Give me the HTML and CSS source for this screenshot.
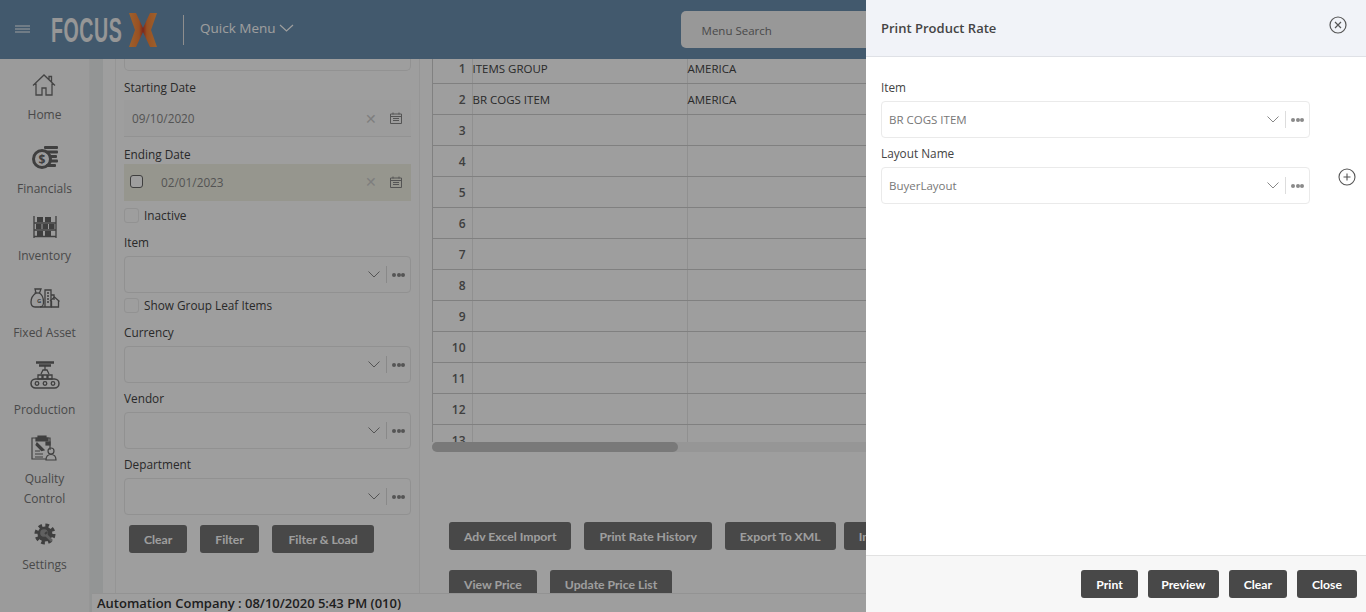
FILE: index.html
```html
<!DOCTYPE html>
<html lang="en">
<head>
  <meta charset="UTF-8">
  <title>Print Product Rate</title>
  <link rel="stylesheet" href="styles.css">
</head>
<body>
<div class="topbar">
  <svg class="burger" width="16" height="8" viewBox="0 0 16 8"><path d="M0 1h15M0 4h15M0 7h15" stroke="#fff" stroke-width="1.2"/></svg>
  <span class="logo-text">FOCUS</span>
  <svg class="logo-x" width="28" height="34" viewBox="0 0 28 34">
    <defs>
      <linearGradient id="xfill" x1="0" y1="0" x2="1" y2="0">
        <stop offset="0" stop-color="#ff9c48"/>
        <stop offset=".36" stop-color="#f58238"/>
        <stop offset=".5" stop-color="#c8402f"/>
        <stop offset=".64" stop-color="#f58238"/>
        <stop offset="1" stop-color="#ff9c48"/>
      </linearGradient>
    </defs>
    <path d="M0 0h7l7 15 7-15h7l-6 17 6 17h-7l-7-15-7 15H0l6-17z" fill="url(#xfill)"/>
  </svg>
  <span class="top-divider"></span>
  <span class="quick-menu">Quick Menu</span>
  <svg class="quick-chev" width="15" height="8" viewBox="0 0 15 8"><path d="M1 1l6.500 6L14 1" fill="none" stroke="#fff" stroke-width="1.200"/></svg>
  <div class="menu-search">Menu Search</div>
</div>

<div class="layout">
  <div class="sidebar">
    <div class="nav-item nav-home">
      <svg width="24" height="22" viewBox="0 0 24 22" fill="none" stroke="#6f6f6f" stroke-width="1.300"><path d="M1 11.500L12 1l11 10.500M17 5.500V2.500h2.500v5.500M4 9.500V21h6v-7h4v7h6V9.500"/></svg>
      <span>Home</span>
    </div>
    <div class="nav-item nav-fin">
      <svg width="26" height="24" viewBox="0 0 26 24"><rect x="12" y="0" width="14" height="3" rx="1" fill="#666"/><rect x="14" y="4.500" width="12" height="3" rx="1" fill="#666"/><rect x="17" y="9" width="8" height="3" rx="1" fill="#666"/><rect x="17" y="13.500" width="9" height="3" rx="1" fill="#666"/><rect x="14" y="18" width="10" height="3" rx="1" fill="#666"/><circle cx="10" cy="13" r="8.500" fill="none" stroke="#666" stroke-width="3"/><text x="10" y="17.500" text-anchor="middle" class="coin-text">$</text></svg>
      <span>Financials</span>
    </div>
    <div class="nav-item nav-inv">
      <svg width="24" height="22" viewBox="0 0 24 22"><path d="M1 0v22M23 0v22M1 7h22M1 14h22M1 20.500h22" stroke="#666" stroke-width="1.300"/><path d="M4 1h6v5H4zM12 1h6v5h-6zM3 8h5.500v5H3zM9.500 8H15v5H9.500zM16 8h5.500v5H16zM4 15h6v5H4zM12 15h6v5h-6z" fill="#666"/></svg>
      <span>Inventory</span>
    </div>
    <div class="nav-item nav-fixed">
      <svg width="30" height="20" viewBox="0 0 30 20" fill="none" stroke="#666" stroke-width="1.300"><path d="M5 1h6L9.500 5c3 2 4 5 4 9 0 4-1 5-4 5H5c-3 0-4-2-4-5 0-4 2-7 5-9z"/><path d="M4.500 5h5.500"/><path d="M15 19V2h6v17zM21 7h3v5M15 19H10M17 5h2M17 8h2M17 11h2M17 14h2"/><path d="M20 13l4.500-4 5 4.500M21.500 13v6h7v-6"/><text x="7" y="15" class="bag-text" stroke="none">G</text></svg>
      <span>Fixed Asset</span>
    </div>
    <div class="nav-item nav-prod">
      <svg width="30" height="28" viewBox="0 0 30 28" fill="none" stroke="#666" stroke-width="1.300"><path d="M6 1.500h18M9 4.500h12" stroke-width="2.500"/><path d="M15 5v4M11 13l2-4h4l2 4"/><path d="M8 14h4v4H8zM13 14h4v4h-4zM18 14h4v4h-4z"/><rect x="1" y="18" width="28" height="9" rx="4.500" stroke-width="1.500"/><circle cx="7" cy="22.500" r="1.800"/><circle cx="15" cy="22.500" r="1.800"/><circle cx="23" cy="22.500" r="1.800"/></svg>
      <span>Production</span>
    </div>
    <div class="nav-item nav-qual">
      <svg width="26" height="26" viewBox="0 0 26 26" fill="none" stroke="#666" stroke-width="1.200"><path d="M5 3h14v12M15 24H1V3h4"/><path d="M7 3V1h8v2h2v3H5V3z" fill="#666"/><path d="M4 19h8M4 22h8M4 16h5"/><path d="M6 8l7 7-2.500 .5L5 10z" fill="#666"/><rect x="15" y="7" width="4" height="3" fill="#666"/><circle cx="20" cy="16" r="3"/><path d="M15 25c0-4 2-5.500 5-5.500s5 1.500 5 5.500z"/></svg>
      <span>Quality<br>Control</span>
    </div>
    <div class="nav-item nav-set">
      <svg width="22" height="22" viewBox="0 0 22 22"><circle cx="11" cy="11" r="8" fill="none" stroke="#666" stroke-width="5" stroke-dasharray="3.300 3"/><circle cx="11" cy="11" r="7.500" fill="#666"/><circle cx="10" cy="10" r="3.800" fill="#9c9c9c"/><path d="M11.500 11.500L18 18" stroke="#9c9c9c" stroke-width="2.600"/><path d="M13 9l-2 2" stroke="#666" stroke-width="2"/></svg>
      <span>Settings</span>
    </div>
  </div>

  <div class="strip"></div>

  <div class="work">
    <div class="content">
      <div class="gutter"></div>
      <div class="filters">
        <div class="stub"></div>

        <div class="label">Starting Date</div>
        <div class="date-input date-start">
          <span class="date-val">09/10/2020</span>
          <span class="date-x">&#10005;</span>
          <svg class="cal" width="12" height="12" viewBox="0 0 12 12" fill="none" stroke="#888"><path d="M.5 2h11v9.500H.5zM.5 4.500h11M3 .5v2M9 .5v2M3 6.500h6M3 8.500h6"/></svg>
        </div>

        <div class="label">Ending Date</div>
        <div class="date-input date-end">
          <span class="chk-native"></span>
          <span class="date-val">02/01/2023</span>
          <span class="date-x">&#10005;</span>
          <svg class="cal" width="12" height="12" viewBox="0 0 12 12" fill="none" stroke="#888"><path d="M.5 2h11v9.500H.5zM.5 4.500h11M3 .5v2M9 .5v2M3 6.500h6M3 8.500h6"/></svg>
        </div>

        <div class="check-row check-first"><span class="chk"></span>Inactive</div>

        <div class="label">Item</div>
        <div class="select">
          <span class="sel-val"></span>
          <svg class="chev" width="12" height="7" viewBox="0 0 12 7"><path d="M.5 .5L6 6l5.500-5.500" fill="none" stroke="#888"/></svg>
          <span class="sel-div"></span>
          <span class="dots"><i></i><i></i><i></i></span>
        </div>

        <div class="check-row"><span class="chk"></span>Show Group Leaf Items</div>

        <div class="label">Currency</div>
        <div class="select select-gap">
          <span class="sel-val"></span>
          <svg class="chev" width="12" height="7" viewBox="0 0 12 7"><path d="M.5 .5L6 6l5.500-5.500" fill="none" stroke="#888"/></svg>
          <span class="sel-div"></span>
          <span class="dots"><i></i><i></i><i></i></span>
        </div>

        <div class="label">Vendor</div>
        <div class="select select-gap">
          <span class="sel-val"></span>
          <svg class="chev" width="12" height="7" viewBox="0 0 12 7"><path d="M.5 .5L6 6l5.500-5.500" fill="none" stroke="#888"/></svg>
          <span class="sel-div"></span>
          <span class="dots"><i></i><i></i><i></i></span>
        </div>

        <div class="label">Department</div>
        <div class="select">
          <span class="sel-val"></span>
          <svg class="chev" width="12" height="7" viewBox="0 0 12 7"><path d="M.5 .5L6 6l5.500-5.500" fill="none" stroke="#888"/></svg>
          <span class="sel-div"></span>
          <span class="dots"><i></i><i></i><i></i></span>
        </div>

        <div class="filter-btns">
          <button class="btn btn-dim">Clear</button>
          <button class="btn btn-dim">Filter</button>
          <button class="btn btn-dim btn-wide">Filter &amp; Load</button>
        </div>
      </div>

      <div class="grid-panel">
        <div class="grid-wrap">
          <table class="rate-grid">
            <tr><td class="num">1</td><td class="c-item">ITEMS GROUP</td><td>AMERICA</td></tr>
            <tr><td class="num">2</td><td class="c-item">BR COGS ITEM</td><td>AMERICA</td></tr>
            <tr><td class="num">3</td><td class="c-item"></td><td></td></tr>
            <tr><td class="num">4</td><td class="c-item"></td><td></td></tr>
            <tr><td class="num">5</td><td class="c-item"></td><td></td></tr>
            <tr><td class="num">6</td><td class="c-item"></td><td></td></tr>
            <tr><td class="num">7</td><td class="c-item"></td><td></td></tr>
            <tr><td class="num">8</td><td class="c-item"></td><td></td></tr>
            <tr><td class="num">9</td><td class="c-item"></td><td></td></tr>
            <tr><td class="num">10</td><td class="c-item"></td><td></td></tr>
            <tr><td class="num">11</td><td class="c-item"></td><td></td></tr>
            <tr><td class="num">12</td><td class="c-item"></td><td></td></tr>
            <tr><td class="num">13</td><td class="c-item"></td><td></td></tr>
          </table>
        </div>
        <div class="hscroll"><div class="hthumb"></div></div>
        <div class="grid-btns">
          <button class="btn btn-dim">Adv Excel Import</button>
          <button class="btn btn-dim">Print Rate History</button>
          <button class="btn btn-dim">Export To XML</button>
          <button class="btn btn-dim btn-tight">Import From XML</button>
        </div>
        <div class="grid-btns grid-btns-2">
          <button class="btn btn-dim">View Price</button>
          <button class="btn btn-dim">Update Price List</button>
        </div>
      </div>
    </div>
    <div class="statusbar">Automation Company : 08/10/2020 5:43 PM (010)</div>
  </div>
</div>

<div class="overlay"></div>

<div class="drawer">
  <div class="drawer-head">
    <span class="drawer-title">Print Product Rate</span>
    <svg class="drawer-close" width="18" height="18" viewBox="0 0 18 18" fill="none" stroke="#555" stroke-width="1.200"><circle cx="9" cy="9" r="8"/><path d="M6 6l6 6M12 6l-6 6"/></svg>
  </div>
  <div class="drawer-body">
    <div class="drawer-field">
      <div class="label label-on">Item</div>
      <div class="select">
        <span class="sel-val">BR COGS ITEM</span>
        <svg class="chev" width="12" height="7" viewBox="0 0 12 7"><path d="M.5 .5L6 6l5.500-5.500" fill="none" stroke="#888"/></svg>
        <span class="sel-div"></span>
        <span class="dots"><i></i><i></i><i></i></span>
      </div>
    </div>
    <div class="drawer-row">
      <div class="drawer-field">
        <div class="label label-on">Layout Name</div>
        <div class="select">
          <span class="sel-val">BuyerLayout</span>
          <svg class="chev" width="12" height="7" viewBox="0 0 12 7"><path d="M.5 .5L6 6l5.500-5.500" fill="none" stroke="#888"/></svg>
          <span class="sel-div"></span>
          <span class="dots"><i></i><i></i><i></i></span>
        </div>
      </div>
      <svg class="add-icon" width="18" height="18" viewBox="0 0 18 18" fill="none" stroke="#555" stroke-width="1.100"><circle cx="9" cy="9" r="8"/><path d="M5.500 9h7M9 5.500v7"/></svg>
    </div>
  </div>
  <div class="drawer-foot">
    <button class="btn">Print</button>
    <button class="btn btn-narrow">Preview</button>
    <button class="btn">Clear</button>
    <button class="btn">Close</button>
  </div>
</div>
</body>
</html>
```

FILE: styles.css
```css
*{box-sizing:border-box;}
html,body{height:100%;}
body{margin:0; height:612px; overflow:hidden; display:flex; flex-direction:column; background:#fff; color:#333; font-family:"Open Sans","Noto Sans",Arial,sans-serif; font-size:12px;}

/* top bar */
.topbar{height:59px; flex:none; background:#6b90b0; display:flex; align-items:center; color:#fff; overflow:hidden;}
.burger{margin-left:15px; margin-top:-2px;}
.logo-text{width:72px; margin-left:20px; font-family:"Liberation Sans Narrow","Liberation Sans",sans-serif; font-weight:700; font-size:35px; line-height:36px; letter-spacing:1px; color:#f2f2f2; transform:scaleX(.56); transform-origin:left center; white-space:nowrap;}
.logo-x{margin-left:6px; margin-top:1px;}
.top-divider{width:1px; height:30px; background:#e6e6e6; margin-left:26px;}
.quick-menu{margin-left:16px; font-size:13.500px; margin-top:-3px;}
.quick-chev{margin-left:3px; margin-top:-3px;}
.menu-search{margin-left:387px; width:400px; height:37px; flex:none; background:#f5f5f5; border-radius:5px; padding-left:21px; line-height:40px; font-size:11.500px; color:#777;}

.layout{flex:1; display:flex; min-height:0;}

/* left nav */
.sidebar{width:90px; flex:none; background:#fafafa; border-right:1px solid #f2f2f2; display:flex; flex-direction:column; align-items:center; color:#777; font-size:12px;}
.nav-item{display:flex; flex-direction:column; align-items:center; text-align:center; line-height:20px;}
.nav-item svg{display:block;}
.nav-home{margin-top:15px;}
.nav-home svg{margin-bottom:9px;}
.nav-fin{margin-top:21px;}
.nav-fin svg{margin-bottom:9px;}
.nav-inv{margin-top:17px;}
.nav-inv svg{margin-bottom:8px;}
.nav-fixed{margin-top:22px;}
.nav-fixed svg{margin-bottom:15px;}
.nav-prod{margin-top:18px;}
.nav-prod svg{margin-bottom:11px;}
.nav-qual{margin-top:15px;}
.nav-qual svg{margin-bottom:8px;}
.nav-set{margin-top:14px;}
.nav-set svg{margin-bottom:10px;}
.coin-text{font-family:"Open Sans",sans-serif; font-size:12px; font-weight:700; fill:#666;}
.bag-text{font-family:"Open Sans",sans-serif; font-size:6px; font-weight:700; fill:#666;}

.strip{width:13px; flex:none; background:#edf1f1;}

.work{flex:1; min-width:0; display:flex; flex-direction:column;}
.content{flex:1; min-height:0; display:flex; overflow:hidden;}
.gutter{width:13px; flex:none; border-right:1px solid #f0f0f0;}

/* filter column */
.filters{width:304px; flex:none; padding:0 8px; border-right:1px solid #f0f0f0;}
.stub{height:12px; margin-bottom:8px; border:1px solid #ececec; border-top:none; border-radius:0 0 5px 5px;}
.label{height:18px; line-height:16px; margin-bottom:4px; font-size:11.800px; color:#444;}
.date-input{height:37px; display:flex; align-items:center; padding:0 9px 0 8px; background:#fcfcfc; border-bottom:1px solid #ececec; color:#888;}
.date-start{margin-top:-1px; margin-bottom:9px;}
.date-end{margin-top:-4px; padding-left:6px; padding-bottom:2px; background:#f3f3e6; border-bottom:none;}
.date-val{flex:1; font-size:11.800px;}
.date-x{font-size:14px; color:#ccc; margin-right:13px;}
.cal{display:block;}
.chk-native{width:13px; height:13px; margin-right:18px; border:1px solid #666; border-radius:3px; background:#fff; margin-top:-1px;}
.check-row{height:15px; line-height:15px; padding-bottom:0; margin-top:5px; margin-bottom:11px; display:flex; align-items:flex-start; color:#444; font-size:11.800px;}
.check-first{margin-top:7px;}
.chk{width:15px; height:15px; margin-right:5px; border:1px solid #ececec; border-radius:3px;}
.select{height:37px; display:flex; align-items:center; padding:0 5px 0 7px; background:#fff; border:1px solid #eaeaea; border-radius:4px;}
.select-gap{margin-bottom:7px;}
.sel-val{flex:1; font-size:11.500px; color:#777;}
.chev{display:block; margin-right:6px;}
.sel-div{width:1px; height:17px; background:#ddd; margin-right:5px;}
.dots{display:flex; gap:.5px; width:13px;}
.dots i{width:4px; height:4px; border-radius:50%; background:#8a8a8a;}
.filter-btns{display:flex; gap:13px; margin-top:10px; padding-left:5px;}

/* buttons */
.btn{height:28px; padding:0 15px; background:#484848; color:#fff; border:none; border-radius:3px; font-family:"Lato","Open Sans",sans-serif; font-size:12.200px; font-weight:700; white-space:nowrap;}
.btn-dim{background:#747474;}
.btn-wide{padding:0 16.500px;}
.btn-narrow{padding:0 13.500px;}

/* grid */
.grid-panel{flex:1; min-width:0; padding-left:12px; overflow:hidden;}
.grid-wrap{height:383px; overflow:hidden; border-left:1px solid #d0d0d0;}
.rate-grid{margin-top:-7px; width:900px; table-layout:fixed; border-collapse:collapse; font-size:11.500px; color:#444;}
.rate-grid td{height:31px; padding:2px 0 0 0; border-bottom:1px solid #cfcfcf; border-right:1px solid #e8e8e8; white-space:nowrap;}
.rate-grid td.num{width:39px; text-align:right; padding-right:6px; font-size:12px; font-weight:600; color:#666;}
.rate-grid td.c-item{width:215px;}
.hscroll{height:10px; background:#f2f2f2; border-radius:5px;}
.hthumb{width:246px; height:10px; background:#c4c4c4; border-radius:5px;}
.grid-btns{display:flex; gap:13px; margin-top:70px; padding-left:17px;}
.grid-btns-2{margin-top:20px;}
.btn-tight{margin-left:-5px;}

.statusbar{height:19px; flex:none; padding-left:5px; background:#fff; border-top:1px solid #eee; line-height:18px; margin-left:-11px; font-size:13px; font-weight:600; color:#333; white-space:nowrap; position:relative;}

/* dim layer and the slide-in panel on top of it */
.overlay{position:absolute; inset:0; background:rgba(0,0,0,.38);}
.drawer{position:absolute; top:0; right:0; bottom:0; width:500px; background:#fff; display:flex; flex-direction:column;}
.drawer-head{height:57px; flex:none; display:flex; align-items:center; justify-content:space-between; padding:0 19px 0 15px; background:#f1f3f8; border-bottom:1px solid #dfe1e6;}
.drawer-title{font-size:13px; font-weight:600; color:#444;}
.drawer-close{margin-top:-6px;}
.drawer-body{flex:1; padding:22px 0 0 15px;}
.drawer-field{width:429px; margin-bottom:7px;}
.drawer-row{display:flex; align-items:flex-start;}
.add-icon{margin-left:28px; margin-top:23px;}
.label-on{color:#444;}
.drawer-foot{height:57px; flex:none; display:flex; align-items:center; justify-content:flex-end; gap:10px; padding-right:9px; background:#f7f7f7; border-top:1px solid #e2e2e2;}
```
